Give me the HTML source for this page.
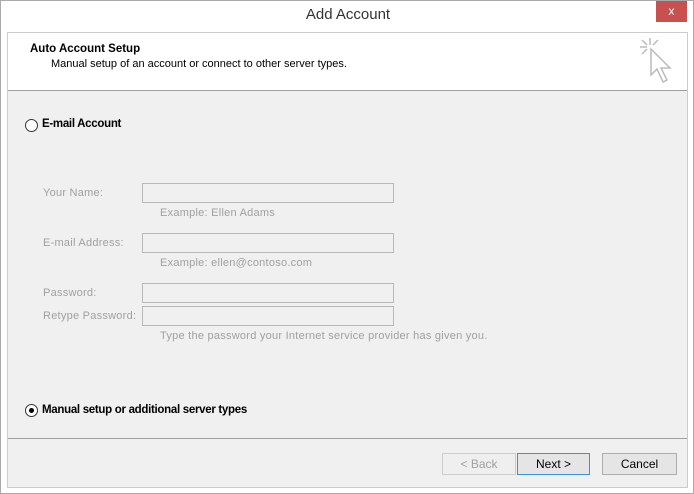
<!DOCTYPE html>
<html><head><style>
*{margin:0;padding:0;box-sizing:border-box}
body{width:694px;height:494px;background:#fff;font-family:"Liberation Sans",sans-serif;position:relative;overflow:hidden}
.win{position:absolute;left:0;top:0;width:694px;height:494px;border:1px solid #aaa;background:#fff}
.a{position:absolute}
.title{left:0;top:5px;width:694px;text-align:center;font-size:15px;color:#333}
.close{left:655px;top:0px;width:31px;height:21px;background:#c75050;color:#fff;font-size:12px;text-align:center;line-height:20px}
.panel{left:6px;top:31px;width:681px;height:456px;border:1px solid #ccc;background:#f0f0f0}
.head{left:0;top:0;width:679px;height:58px;background:#fff;border-bottom:1px solid #a0a0a0}
.lbl{font-size:11px;color:#a0a0a0;letter-spacing:0.25px}
.box{width:252px;height:20px;border:1px solid #b8b8b8;background:#f0f0f0}
.btn{top:420px;height:22px;border:1px solid #adadad;background:#e5e5e5;font-size:12px;text-align:center;line-height:20px}
.radio{width:13px;height:13px;border:1px solid #333;border-radius:50%;background:#fff}
.bold{font-size:11.5px;font-weight:bold;letter-spacing:-0.3px}
</style></head><body>
<div class="win">
<div class="a title">Add Account</div>
<div class="a close">x</div>
<div class="a panel">
 <div class="a head">
  <div class="a" style="left:22px;top:10px;font-size:11.5px;font-weight:bold;color:#000">Auto Account Setup</div>
  <div class="a" style="left:43px;top:25px;font-size:11px;color:#000">Manual setup of an account or connect to other server types.</div>
  <svg class="a" style="left:630px;top:4px" width="36" height="50" viewBox="0 0 36 50" fill="none" stroke="#bbb" stroke-width="1.5">
   <path d="M12 1v7M2 10h7M4 3l5 5M20 3l-5 5M4 17l5-5"/>
   <path d="M13 12v26l6-6 6 13 4-2-6-12 9 0z" fill="#fff"/>
  </svg>
 </div>
 <div class="a radio" style="left:17px;top:86px"></div>
 <div class="a bold" style="left:34px;top:85px">E-mail Account</div>
 <div class="a lbl" style="left:35px;top:154px">Your Name:</div>
 <div class="a box" style="left:134px;top:150px"></div>
 <div class="a lbl" style="left:152px;top:174px">Example: Ellen Adams</div>
 <div class="a lbl" style="left:35px;top:204px">E-mail Address:</div>
 <div class="a box" style="left:134px;top:200px"></div>
 <div class="a lbl" style="left:152px;top:224px">Example: ellen@contoso.com</div>
 <div class="a lbl" style="left:35px;top:254px">Password:</div>
 <div class="a box" style="left:134px;top:250px"></div>
 <div class="a lbl" style="left:35px;top:277px">Retype Password:</div>
 <div class="a box" style="left:134px;top:273px"></div>
 <div class="a lbl" style="left:152px;top:297px">Type the password your Internet service provider has given you.</div>
 <div class="a radio" style="left:17px;top:371px"><div class="a" style="left:3px;top:3px;width:5px;height:5px;border-radius:50%;background:#000"></div></div>
 <div class="a bold" style="left:34px;top:371px">Manual setup or additional server types</div>
 <div class="a" style="left:0;top:405px;width:679px;border-top:1px solid #a0a0a0"></div>
 <div class="a btn" style="left:434px;width:74px;color:#a0a0a0;border-color:#ccc;background:#efefef">&lt; Back</div>
 <div class="a btn" style="left:509px;width:73px;border-color:#3c90e0">Next &gt;</div>
 <div class="a btn" style="left:594px;width:75px">Cancel</div>
</div>
</div>
</body></html>
